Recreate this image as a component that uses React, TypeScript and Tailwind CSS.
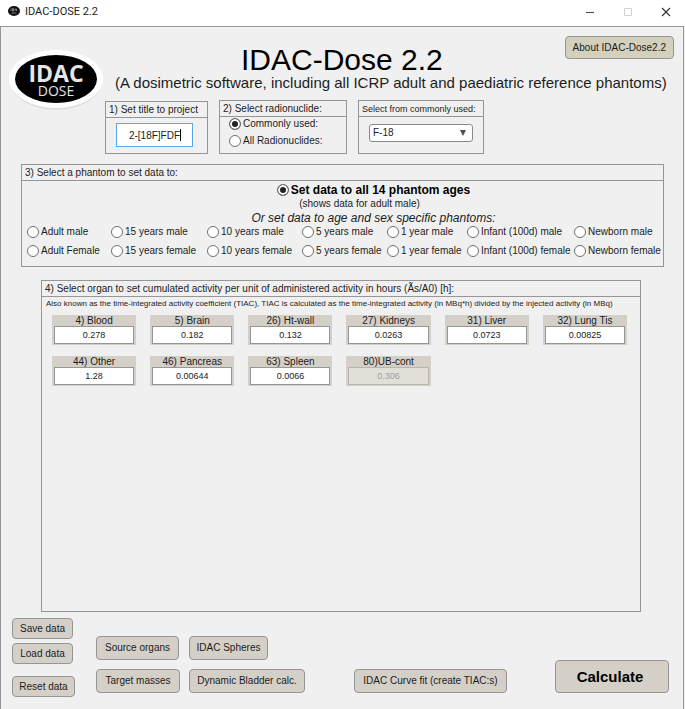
import { useState, type ReactNode } from 'react';
import clsx from 'clsx';

const phantoms = [
  { male: 'Adult male', female: 'Adult Female' },
  { male: '15 years male', female: '15 years female' },
  { male: '10 years male', female: '10 years female' },
  { male: '5 years male', female: '5 years female' },
  { male: '1 year male', female: '1 year female' },
  { male: 'Infant (100d) male', female: 'Infant (100d) female' },
  { male: 'Newborn male', female: 'Newborn female' },
];

const organs = [
  { label: '4) Blood', value: '0.278' },
  { label: '5) Brain', value: '0.182' },
  { label: '26) Ht-wall', value: '0.132' },
  { label: '27) Kidneys', value: '0.0263' },
  { label: '31) Liver', value: '0.0723' },
  { label: '32) Lung Tis', value: '0.00825' },
  { label: '44) Other', value: '1.28' },
  { label: '46) Pancreas', value: '0.00644' },
  { label: '63) Spleen', value: '0.0066' },
  { label: '80)UB-cont', value: '0.306', disabled: true },
];

function Logo() {
  return (
    <svg viewBox="0 0 96 64" className="w-24 h-16 shrink-0" role="img" aria-label="IDAC Dose">
      <ellipse cx="47" cy="32" rx="46" ry="29" fill="#dfdfdf" />
      <ellipse cx="47" cy="30" rx="47" ry="29" fill="#ffffff" />
      <ellipse cx="47" cy="30" rx="41" ry="24" fill="#000000" />
      <text textAnchor="middle" fontFamily="'Open Sans', sans-serif" fill="#e6e6e6">
        <tspan x="47" y="33" fontWeight="700" fontSize="23">IDAC</tspan>
        <tspan x="47" y="47" fontSize="14">DOSE</tspan>
      </text>
    </svg>
  );
}

function Panel({ title, className, titleClass, children }: { title: string; className?: string; titleClass?: string; children: ReactNode }) {
  return (
    <section className={clsx('flex flex-col border border-[#969696]', className)}>
      <h2 className={clsx('h-4 leading-4 pl-[3px] border-b border-[#969696] whitespace-nowrap', titleClass)}>{title}</h2>
      {children}
    </section>
  );
}

type RadioProps = {
  name: string;
  label: string;
  value: string;
  onChange: (value: string) => void;
  className?: string;
};

function Radio({ name, label, value, onChange, className }: RadioProps) {
  return (
    <label className={clsx('flex items-center gap-[2px] whitespace-nowrap', className)}>
      <input
        type="radio"
        name={name}
        checked={value === label}
        onChange={() => onChange(label)}
        className="appearance-none size-3 shrink-0 rounded-full border border-[#707070] bg-white checked:bg-[#222222] checked:shadow-[inset_0_0_0_2px_white]"
      />
      {label}
    </label>
  );
}

function Button({ className, color = 'bg-[#d4d0c8]', children }: { className?: string; color?: string; children: ReactNode }) {
  return (
    <button
      type="button"
      className={clsx('rounded-[4px] border border-[#969696] text-center whitespace-nowrap', color, className)}
    >
      {children}
    </button>
  );
}

export default function App() {
  const [title, setTitle] = useState('2-[18F]FDF');
  const [source, setSource] = useState('Commonly used:');
  const [phantom, setPhantom] = useState('Set data to all 14 phantom ages');

  return (
    <div className="min-h-screen flex flex-col bg-[#f0f0f0] text-[#1c1c1c] text-[10px] leading-3 font-['Liberation_Sans',Arial,sans-serif]">
      {/* Title bar */}
      <header className="h-[26px] shrink-0 flex items-center bg-white pl-2 pr-[14px]">
        <svg viewBox="0 0 12 10" className="w-3 h-[10px] mb-1">
          <ellipse cx="6" cy="5" rx="6" ry="5" fill="#111111" />
          <path d="M3 2.5v2.5M4.5 2.5v2.5h1v-2.5zM7 5V3h1.5v2M3.5 7h5" stroke="#a8a8a8" strokeWidth="0.7" fill="none" />
        </svg>
        <span className="ml-[5px] mb-[2px] text-[11px] font-['Roboto',sans-serif]">IDAC-DOSE 2.2</span>
        <div className="ml-auto mb-[3px] flex items-center gap-7">
          <button type="button" aria-label="Minimize">
            <svg viewBox="0 0 10 10" className="size-[10px]">
              <path d="M1 5.5h8" stroke="#444444" />
            </svg>
          </button>
          <button type="button" aria-label="Maximize" disabled>
            <svg viewBox="0 0 10 10" className="size-[10px]">
              <path d="M1.5 1.5h7v7h-7z" stroke="#d0d0d0" fill="none" />
            </svg>
          </button>
          <button type="button" aria-label="Close">
            <svg viewBox="0 0 10 10" className="size-[10px]">
              <path d="M1 1l8 8M9 1l-8 8" stroke="#333333" strokeWidth="1.1" />
            </svg>
          </button>
        </div>
      </header>

      <main className="flex-1 flex flex-col border-t border-x border-[#969696] mr-px pt-[9px] pb-3">
        <div className="flex pl-2 pr-[9px]">
          <div className="pt-[13px]">
            <Logo />
          </div>
          <div className="flex-1">
            <div className="flex items-start justify-between">
              <h1 className="ml-[136px] mt-[9px] text-[30px] leading-[30px] text-black">IDAC-Dose 2.2</h1>
              <Button className="h-[23px] px-[7px]" color="bg-[#d3d0bb]">About IDAC-Dose2.2</Button>
            </div>
            <p className="pl-[10px] text-[15px] leading-4 whitespace-nowrap">
              (A dosimetric software, including all ICRP adult and paediatric reference phantoms)
            </p>

            <div className="mt-[9px] flex items-end gap-[11px]">
              <Panel title="1) Set title to project" className="w-[103px] h-[53px]">
                <div className="relative ml-[10px] mr-[14px] mt-[5px]">
                  <input
                    aria-label="Project title"
                    value={title}
                    onChange={(e) => setTitle(e.target.value)}
                    className="w-full h-6 border border-[#5ba7e5] bg-white text-center outline-none"
                  />
                  <span className="absolute right-3 top-[6px] w-px h-3 bg-black" />
                </div>
              </Panel>
              <Panel title="2) Select radionuclide:" className="w-[128px] h-[54px]">
                <div className="flex flex-col gap-[5px] pl-[9px] pt-px">
                  <Radio name="source" label="Commonly used:" value={source} onChange={setSource} />
                  <Radio name="source" label="All Radionuclides:" value={source} onChange={setSource} />
                </div>
              </Panel>
              <Panel title="Select from commonly used:" className="w-[126px] h-[54px]" titleClass="text-[9px]">
                <div className="relative mx-[10px] mt-[7px]">
                  <select
                    aria-label="Commonly used radionuclide"
                    className="appearance-none w-full h-[18px] rounded-[3px] border border-[#8a8a8a] bg-white pl-[3px]"
                  >
                    <option>F-18</option>
                  </select>
                  <svg viewBox="0 0 8 6" className="absolute right-[6px] top-[6px] w-2 h-[6px] pointer-events-none">
                    <path d="M1 0h6L4 6z" fill="#505050" />
                  </svg>
                </div>
              </Panel>
            </div>
          </div>
        </div>

        {/* Phantom selection */}
        <Panel title="3) Select a phantom to set data to:" className="ml-5 mr-[19px] mt-[10px]">
          <div className="flex flex-col items-center pt-[2px] pl-[62px]">
            <Radio
              name="phantom"
              label="Set data to all 14 phantom ages"
              value={phantom}
              onChange={setPhantom}
              className="text-[12px] leading-[14px] font-bold text-black"
            />
            <p className="leading-[14px] pr-7">(shows data for adult male)</p>
            <p className="text-[12px] leading-[14px] italic">Or set data to age and sex specific phantoms:</p>
          </div>
          <div className="grid grid-cols-[84fr_96fr_95fr_85fr_80fr_107fr_89fr] gap-y-[7px] pl-[5px] pt-px pb-[9px]">
            {phantoms.map((p) => (
              <Radio key={p.male} name="phantom" label={p.male} value={phantom} onChange={setPhantom} />
            ))}
            {phantoms.map((p) => (
              <Radio key={p.female} name="phantom" label={p.female} value={phantom} onChange={setPhantom} />
            ))}
          </div>
        </Panel>

        {/* Source organs */}
        <Panel
          title="4) Select organ to set cumulated activity per unit of administered activity in hours (Ãs/A0) [h]:"
          className="flex-1 ml-10 mr-[42px] mt-[13px]"
        >
          <p className="pl-1 pt-px text-[8px] whitespace-nowrap">
            Also known as the time-integrated activity coefficient (TIAC), TIAC is calculated as the time-integrated activity (in MBq*h) divided by the injected activity (in MBq)
          </p>
          <div className="grid grid-cols-6 gap-x-[14px] gap-y-[11px] pl-[10px] pr-[13px] pt-[5px] pb-4">
            {organs.map((o) => (
              <label key={o.label} className="flex flex-col h-[30px] bg-[#d4d0c8] px-[2px] pb-px text-center">
                <span className="h-[11px]">{o.label}</span>
                <input
                  defaultValue={o.value}
                  disabled={o.disabled}
                  className="w-full h-[18px] border border-[#969696] bg-white text-center text-[9px] disabled:border-[#b8b5ae] disabled:bg-[#e2dfd9] disabled:text-[#a3a09b]"
                />
              </label>
            ))}
          </div>
        </Panel>

        {/* Actions */}
        <footer className="flex items-start pl-[11px] pr-[14px] pt-[6px]">
          <div className="flex flex-col items-start">
            <Button className="w-[61px] h-[21px]">Save data</Button>
            <Button className="w-[61px] h-[21px] mt-1">Load data</Button>
            <Button className="w-[63px] h-[21px] mt-3">Reset data</Button>
          </div>
          <div className="grid grid-cols-[84px_116px] justify-items-start gap-x-[9px] gap-y-[9px] ml-[21px] mt-[18px]">
            <Button className="w-[83px] h-6">Source organs</Button>
            <Button className="w-[79px] h-6">IDAC Spheres</Button>
            <Button className="w-full h-6">Target masses</Button>
            <Button className="w-full h-6">Dynamic Bladder calc.</Button>
          </div>
          <div className="flex-1 flex items-end justify-between pl-[49px] mt-[42px]">
            <Button className="w-[153px] h-6">IDAC Curve fit (create TIAC:s)</Button>
            <Button className="w-[114px] h-[33px] pr-1 text-[15px] font-bold text-black">Calculate</Button>
          </div>
        </footer>
      </main>
    </div>
  );
}
